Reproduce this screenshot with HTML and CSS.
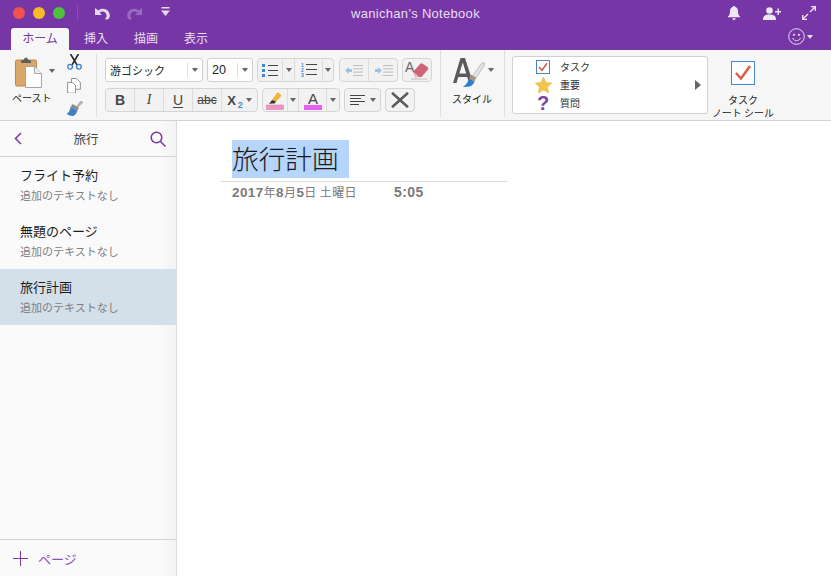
FILE: index.html
```html
<!DOCTYPE html>
<html lang="ja">
<head>
<meta charset="utf-8">
<title>wanichan's Notebook</title>
<link rel="stylesheet" href="styles.css">
</head>
<body>
<div class="app">
  <header class="chrome">
    <div class="titlebar">
      <div class="tb-left">
        <span class="light red"></span><span class="light yellow"></span><span class="light green"></span>
        <span class="tb-sep"></span>
        <svg class="qa undo" width="16" height="13" viewBox="0 0 16 13"><path d="M1 1v7h7L5.6 5.7C6.6 4.9 7.500 4.600 8.600 4.600c2.300 0 3.900 1.700 4 4 0 1.500-.6 2.600-1.700 3.600l3 .3c1.300-1.200 1.900-2.500 1.900-4.100C15.800 4.600 12.800 1.700 8.700 1.700c-1.700 0-3.200.6-4.400 1.700z" fill="#e6d9f0"/></svg>
        <svg class="qa redo" width="16" height="13" viewBox="0 0 16 13"><path d="M15 1v7H8l2.400-2.300C9.400 4.900 8.500 4.600 7.400 4.600c-2.300 0-3.900 1.700-4 4 0 1.500.6 2.600 1.700 3.600l-3 .3C.9 11.300.3 10 .3 8.400.2 4.600 3.200 1.700 7.300 1.700c1.700 0 3.200.6 4.400 1.700z" fill="#9a6cc0"/></svg>
        <svg class="qa more" width="9" height="10" viewBox="0 0 9 10"><rect x="0.500" y="0" width="8" height="1.500" fill="#e6d9f0"/><path d="M0 3.500h9L4.500 9z" fill="#e6d9f0"/></svg>
      </div>
      <div class="tb-title">wanichan's Notebook</div>
      <div class="tb-right">
        <svg width="12" height="14" viewBox="0 0 12 14"><path d="M6 0c.8 0 1.200.5 1.300 1.100C9.200 1.700 10 3.200 10 5.200c0 2.800.6 4 2 5.300v.8H0v-.8c1.400-1.300 2-2.500 2-5.300 0-2 .8-3.500 2.700-4.100C4.800.5 5.200 0 6 0zM4.400 12.200h3.200C7.500 13.200 6.900 14 6 14s-1.500-.8-1.600-1.800z" fill="#efe6f5"/></svg>
        <svg width="18" height="13" viewBox="0 0 18 13"><circle cx="6.500" cy="3.500" r="3.300" fill="#efe6f5"/><path d="M0 13c0-4 2-5.500 6.500-5.500S13 9 13 13z" fill="#efe6f5"/><path d="M12 4h2.500V1.500h1.400V4H18v1.400h-2.100V8h-1.400V5.400H12z" fill="#efe6f5"/></svg>
        <svg width="14" height="14" viewBox="0 0 14 14" fill="none" stroke="#efe6f5" stroke-width="1.300"><path d="M8 6l5.300-5.300M9 .7h4.300V5M6 8L.7 13.300M.7 9v4.300H5"/></svg>
      </div>
    </div>
    <div class="tabrow">
      <nav class="tabs">
        <span class="tab active">ホーム</span>
        <span class="tab">挿入</span>
        <span class="tab">描画</span>
        <span class="tab">表示</span>
      </nav>
      <div class="smile">
        <svg width="17" height="17" viewBox="0 0 17 17" fill="none" stroke="#e8dcf0" stroke-width="1"><circle cx="8.500" cy="8.500" r="7.800"/><circle cx="6" cy="6.800" r=".7" fill="#e8dcf0"/><circle cx="11" cy="6.800" r=".7" fill="#e8dcf0"/><path d="M4.500 10c1 2 2.500 2.700 4 2.700s3-.7 4-2.700"/></svg>
        <span class="caret light-caret"></span>
      </div>
    </div>
  </header>

  <section class="ribbon">
    <div class="group paste-group">
      <div class="paste">
        <div class="paste-top">
          <svg width="27" height="31" viewBox="0 0 27 31">
            <rect x="0.500" y="3" width="21" height="26" rx="1.500" fill="#d9a869" stroke="#b98a50"/>
            <path d="M6 4.500c0-1 1-1.500 2-1.500h.8c.3-1.500 1.200-2.500 2.200-2.500s1.900 1 2.200 2.500h.8c1 0 2 .5 2 1.500V6H6z" fill="#5e5e5e"/>
            <path d="M10.500 9.500h9l7 7V30.500h-16z" fill="#fff" stroke="#a5a5a5"/>
            <path d="M19.500 9.500v7h7" fill="#f0f0f0" stroke="#a5a5a5"/>
          </svg>
          <span class="caret paste-caret"></span>
        </div>
        <span class="paste-label">ペースト</span>
      </div>
      <div class="clip-tools">
        <svg width="15" height="16" viewBox="0 0 15 16" fill="none"><path d="M3.500 0l6.500 11M11.500 0L5 11" stroke="#222" stroke-width="1.600"/><circle cx="3" cy="13" r="2.400" stroke="#3a7cc4" stroke-width="1.300"/><circle cx="12" cy="13" r="2.400" stroke="#3a7cc4" stroke-width="1.300"/></svg>
        <svg width="14" height="16" viewBox="0 0 14 16" fill="#fff" stroke="#8c8c8c"><path d="M4.500 .5h5l4 4v7h-9z"/><path d="M.5 4.500h5l3 3v8h-8z"/></svg>
        <svg width="17" height="16" viewBox="0 0 17 16"><path d="M11 5l3.600-4.400c.6-.6 1.300-.5 1.800 0s.4 1.200-.1 1.700L12 6z" fill="#b8b8b8" stroke="#888" stroke-width=".5"/><path d="M6.500 3l6.500 4-1.500 3L4.500 6z" fill="#8a8a8a"/><path d="M4.500 6l7 4c-1 2.500-2.500 5-4.500 5.300C5 15.500 2.500 14.500.5 13 2.800 12 3.800 9 4.500 6z" fill="#3f7fc2"/></svg>
      </div>
    </div>

    <div class="group font-group">
      <div class="row">
        <div class="combo font-name"><span class="combo-text">游ゴシック</span><span class="combo-arrow"><span class="caret"></span></span></div>
        <div class="combo font-size"><span class="combo-text">20</span><span class="combo-arrow"><span class="caret"></span></span></div>
        <div class="btns list-btns">
          <span class="btn w-bul">
            <svg width="16" height="13" viewBox="0 0 16 13"><g fill="#3d88d8"><rect x="0" y="0" width="3" height="3"/><rect x="0" y="5" width="3" height="3"/><rect x="0" y="10" width="3" height="3"/></g><g fill="#444"><rect x="6" y="1" width="10" height="1"/><rect x="6" y="6" width="10" height="1"/><rect x="6" y="11" width="10" height="1"/></g></svg>
          </span>
          <span class="btn w-car"><span class="caret"></span></span>
          <span class="btn w-num">
            <svg width="16" height="14" viewBox="0 0 16 14"><g fill="#3d88d8" font-family="Liberation Sans" font-size="5" font-weight="700"><text x="0" y="4">1</text><text x="0" y="9">2</text><text x="0" y="14">3</text></g><g fill="#444"><rect x="5" y="1" width="11" height="1"/><rect x="5" y="6" width="11" height="1"/><rect x="5" y="11" width="11" height="1"/></g></svg>
          </span>
          <span class="btn w-car2"><span class="caret"></span></span>
        </div>
        <div class="btns indent-btns">
          <span class="btn w-ind">
            <svg width="18" height="11" viewBox="0 0 18 11"><path d="M0 5.500L4 2v2h3v3H4v2z" fill="#9cc3e6"/><g fill="#bdbdbd"><rect x="8" y="0" width="10" height="1"/><rect x="8" y="3.300" width="10" height="1"/><rect x="8" y="6.600" width="10" height="1"/><rect x="8" y="10" width="10" height="1"/></g></svg>
          </span>
          <span class="btn w-ind">
            <svg width="18" height="11" viewBox="0 0 18 11"><path d="M7 5.500L3 2v2H0v3h3v2z" fill="#9cc3e6"/><g fill="#bdbdbd"><rect x="8" y="0" width="10" height="1"/><rect x="8" y="3.300" width="10" height="1"/><rect x="8" y="6.600" width="10" height="1"/><rect x="8" y="10" width="10" height="1"/></g></svg>
          </span>
        </div>
        <div class="btns clear-btn">
          <span class="btn w-clear">
            <svg width="25" height="20" viewBox="0 0 25 20"><text x="0" y="12" font-family="Liberation Sans" font-size="14" fill="#666">A</text><path d="M8 12l7-8c1-1 2-1 3 0l4.500 3c1 1 1 2 0 3l-6 7h-3.500z" fill="#cf6475"/><path d="M8 12l5.500 4-1 1.500H10z" fill="#eeb6be"/><rect x="6" y="18.500" width="16" height="1" fill="#bbb"/></svg>
          </span>
        </div>
      </div>
      <div class="row">
        <div class="btns format-btns">
          <span class="btn w-fmt fmt b">B</span>
          <span class="btn w-fmt fmt i">I</span>
          <span class="btn w-fmt fmt u">U</span>
          <span class="btn w-fmt fmt s">abc</span>
          <span class="btn w-sub">
            <span class="x2">X<sub>2</sub></span><span class="caret"></span>
          </span>
        </div>
        <div class="btns color-btns">
          <span class="btn w-col1">
            <svg width="18" height="19" viewBox="0 0 18 19"><path d="M6 9l5-7c.4-.5 1-.6 1.500-.2l2.500 2c.5.4.5 1 .1 1.400L10 10.500z" fill="#f0b63c"/><path d="M6 9l4 1.500-1.500 2H5.500L3 13z" fill="#333"/><rect x="0.500" y="14" width="17" height="4.500" fill="#ef94c4" stroke="#d67aa9" stroke-width=".5"/></svg>
          </span>
          <span class="btn w-car3"><span class="caret"></span></span>
          <span class="btn w-col2">
            <svg width="18" height="19" viewBox="0 0 18 19"><text x="9" y="12.500" text-anchor="middle" font-family="Liberation Sans" font-size="15" fill="#444">A</text><rect x="0" y="14" width="18" height="5" fill="#e85ff0"/></svg>
          </span>
          <span class="btn w-car4"><span class="caret"></span></span>
        </div>
        <div class="btns align-btn">
          <span class="btn w-align">
            <svg width="15" height="10" viewBox="0 0 15 10"><g fill="#444"><rect x="0" y="0" width="15" height="1"/><rect x="0" y="3" width="11" height="1"/><rect x="0" y="6" width="15" height="1"/><rect x="0" y="9" width="9" height="1"/></g></svg>
            <span class="caret"></span>
          </span>
        </div>
        <div class="btns del-btn">
          <span class="btn w-del">
            <svg width="18" height="16" viewBox="0 0 18 16"><path d="M1 .8l16 14.400M17 .8L1 15.200" stroke="#5a5a5a" stroke-width="2.600" fill="none"/></svg>
          </span>
        </div>
      </div>
    </div>

    <div class="group style-group">
      <div class="style-top">
        <svg width="32" height="30" viewBox="0 0 32 30">
          <path d="M7.500 0h4.500l8 25h-4l-1.800-6H5.300l-1.800 6H.0zM6.300 15.500h6.900L9.800 4.500z" fill="#5a5a5a"/>
          <path d="M19.500 18L28.500 5.500c.8-1 2-1.200 2.800-.5.700.7.500 1.800-.3 2.800L23 20z" fill="#e3e3e3" stroke="#9d9d9d" stroke-width=".6"/>
          <path d="M18 16.500l5 3.500-1.500 3.500-5.500-2.500z" fill="#a89478"/>
          <path d="M16 21l5.500 2.500c-1.200 3-3 4.600-5 5-1.500.3-4 .5-6.500.5 2.500-1.500 4.500-4.500 6-8z" fill="#2f7fd0"/>
        </svg>
        <span class="caret style-caret"></span>
      </div>
      <span class="style-label">スタイル</span>
    </div>

    <div class="tagbox">
      <ul class="taglist">
        <li>
          <span class="tag-ico"><svg width="14" height="14" viewBox="0 0 14 14"><rect x=".5" y=".5" width="13" height="13" fill="#fff" stroke="#4a86c5"/><path d="M3 7l3 3.200 5-7" fill="none" stroke="#d4574e" stroke-width="1.500"/></svg></span>
          <span>タスク</span>
        </li>
        <li>
          <span class="tag-ico"><svg width="17" height="16" viewBox="0 0 17 16"><path d="M8.500 0l2.500 5.500 5.800.6-4.300 4 1.200 5.900-5.200-3-5.200 3 1.200-5.900-4.300-4 5.800-.6z" fill="#f3c54a" stroke="#e2ad35" stroke-width=".5"/></svg></span>
          <span>重要</span>
        </li>
        <li>
          <span class="tag-ico q">?</span>
          <span>質問</span>
        </li>
      </ul>
      <span class="tag-arrow"></span>
    </div>

    <div class="group task-group">
      <svg width="24" height="24" viewBox="0 0 24 24"><rect x=".5" y=".5" width="23" height="23" fill="#fff" stroke="#4a86c5"/><path d="M5 12l5 5.500 9-12.500" fill="none" stroke="#d9614c" stroke-width="2.600"/></svg>
      <span class="task-l1">タスク</span>
      <span class="task-l2">ノート シール</span>
    </div>
  </section>

  <main class="body">
    <aside class="sidebar">
      <div class="side-head">
        <svg width="8" height="13" viewBox="0 0 8 13" fill="none" stroke="#7a35a6" stroke-width="1.500"><path d="M7 1L1.500 6.500 7 12"/></svg>
        <span class="side-title">旅行</span>
        <svg width="16" height="16" viewBox="0 0 16 16" fill="none" stroke="#7a35a6" stroke-width="1.500"><circle cx="6.500" cy="6.500" r="5.300"/><path d="M10.500 10.500l5 5"/></svg>
      </div>
      <ul class="pages">
        <li class="page-item"><span class="p-title">フライト予約</span><span class="p-sub">追加のテキストなし</span></li>
        <li class="page-item"><span class="p-title">無題のページ</span><span class="p-sub">追加のテキストなし</span></li>
        <li class="page-item selected"><span class="p-title">旅行計画</span><span class="p-sub">追加のテキストなし</span></li>
      </ul>
      <div class="side-foot">
        <svg width="15" height="15" viewBox="0 0 15 15" fill="none" stroke="#7a35a6" stroke-width="1"><path d="M7.500 0v15M0 7.500h15"/></svg>
        <span class="add-page">ページ</span>
      </div>
    </aside>
    <article class="note">
      <h1 class="note-title"><span class="sel">旅行計画&nbsp;</span></h1>
      <div class="note-meta"><span class="date"><b>2017</b>年<b>8</b>月<b>5</b>日 土曜日</span><span class="time">5:05</span></div>
    </article>
  </main>
</div>
</body>
</html>
```

FILE: styles.css
```css
* { box-sizing: border-box; }
html, body { margin: 0; height: 100%; }
body { font-family: "Noto Sans CJK JP", "Liberation Sans", sans-serif; background: #fff; overflow: hidden; }
.app { width: 831px; height: 576px; display: flex; flex-direction: column; }

.chrome { background: #7636a5; height: 50px; flex: none; display: flex; flex-direction: column; }
.titlebar { height: 28px; display: grid; grid-template-columns: 1fr auto 1fr; align-items: center; }
.tb-left { display: flex; align-items: center; padding-left: 13px; margin-top: -2px; }
.light { width: 12px; height: 12px; border-radius: 50%; margin-right: 8px; }
.red { background: #f0534f; }
.yellow { background: #f9b92b; }
.green { background: #4cc23f; }
.tb-sep { width: 1px; height: 16px; background: #8750ae; margin-left: 4px; }
.qa { flex: none; }
.undo { margin-left: 16px; }
.redo { margin-left: 17px; }
.more { margin-left: 18px; margin-top: -2px; }
.tb-title { font-family: "Liberation Sans", sans-serif; font-size: 13px; letter-spacing: .3px; color: #e9dff1; margin-top: -2px; }
.tb-right { display: flex; align-items: center; justify-content: flex-end; padding-right: 15px; margin-top: -2px; }
.tb-right svg:nth-child(2) { margin-left: 23px; }
.tb-right svg:nth-child(3) { margin-left: 21px; }

.tabrow { height: 22px; display: flex; justify-content: space-between; }
.tabs { display: flex; padding-left: 11px; }
.tab { font-size: 12px; line-height: 19px; color: #e9dff1; height: 22px; width: 50px; text-align: center; white-space: nowrap; }
.tab.active { width: 58px; margin-right: 2px; background: #f6f6f6; color: #7636a5; border-radius: 3px 3px 0 0; }
.smile { display: flex; align-items: center; gap: 2px; padding-right: 18px; margin-top: -5px; height: 27px; }
.smile .light-caret { border-top-color: #e8dcf0; }

.ribbon { height: 71px; flex: none; background: #f6f6f6; border-bottom: 1px solid #d4d4d4; display: flex; }
.group { display: flex; flex: none; }
.paste-group { width: 97px; border-right: 1px solid #dedede; margin: 4px 0 3px; padding-left: 12px; }
.paste { display: flex; flex-direction: column; width: 48px; padding-top: 2px; }
.paste-top { display: flex; align-items: center; gap: 7px; padding-left: 3px; height: 33px; }
.paste-caret { margin-top: -4px; }
.paste-label { font-size: 10px; line-height: 14px; margin-top: 2px; color: #222; white-space: nowrap; }
.clip-tools { display: flex; flex-direction: column; align-items: center; gap: 8px; width: 18px; margin-left: 5px; }

.caret { display: inline-block; width: 0; height: 0; border-left: 3px solid transparent; border-right: 3px solid transparent; border-top: 4px solid #666; flex: none; }

.font-group { flex-direction: column; width: 344px; padding: 8px 0 0 8px; gap: 6px; border-right: 1px solid #dedede; margin-bottom: 3px; }
.row { display: flex; height: 24px; }
.combo { height: 24px; background: #fff; border: 1px solid #d0d0d0; border-radius: 3px; display: flex; align-items: center; }
.font-name { width: 98px; }
.font-size { width: 46px; margin-left: 4px; }
.combo-text { flex: 1; font-size: 11px; padding-left: 4px; color: #222; white-space: nowrap; }
.font-size .combo-text { font-family: "Liberation Sans", sans-serif; font-size: 12.500px; }
.combo-arrow { width: 15px; height: 14px; border-left: 1px solid #ddd; display: flex; align-items: center; justify-content: center; }

.btns { display: flex; height: 24px; background: #f2f2f2; border: 1px solid #d4d4d4; border-radius: 4px; overflow: hidden; flex: none; }
.btn { display: flex; align-items: center; justify-content: center; height: 100%; border-right: 1px solid #dcdcdc; flex: none; }
.btn:last-child { border-right: 0; }
.list-btns { width: 77px; margin-left: 4px; }
.w-bul { width: 25px; }
.w-car { width: 12px; }
.w-num { width: 28px; }
.w-car2 { flex: 1; }
.indent-btns { width: 59px; margin-left: 5px; }
.w-ind { width: 29px; }
.clear-btn { width: 30px; margin-left: 4px; }
.w-clear { width: 100%; }

.format-btns { width: 153px; }
.w-fmt { width: 29px; }
.fmt { font-family: "Liberation Sans", sans-serif; font-size: 14px; color: #444; }
.b { font-weight: 700; }
.i { font-style: italic; font-family: "Liberation Serif", serif; }
.u { text-decoration: underline; text-underline-offset: 2px; }
.s { text-decoration: line-through; font-size: 12px; }
.w-sub { flex: 1; gap: 3px; }
.x2 { font-family: "Liberation Sans", sans-serif; font-weight: 700; font-size: 13px; color: #444; line-height: 1; }
.x2 sub { color: #3d88d8; font-size: 9px; line-height: 0; margin-left: 2px; }
.color-btns { width: 78px; margin-left: 4px; }
.w-col1 { width: 25px; }
.w-col2 { width: 28px; }
.w-car3 { width: 11px; }
.w-car4 { flex: 1; }
.align-btn { width: 37px; margin-left: 4px; }
.w-align { width: 100%; gap: 5px; }
.del-btn { width: 30px; margin-left: 4px; }
.w-del { width: 100%; }

.style-group { flex-direction: column; width: 64px; border-right: 1px solid #dedede; margin-bottom: 3px; padding: 7px 0 0 12px; }
.style-top { display: flex; align-items: center; gap: 3px; height: 32px; }
.style-caret { margin-top: -6px; }
.style-label { font-size: 10px; line-height: 14px; margin-top: 3px; margin-left: -1px; color: #222; white-space: nowrap; }

.tagbox { width: 196px; height: 58px; margin: 6px 0 0 7px; background: #fff; border: 1px solid #d0d0d0; border-radius: 3px; display: flex; align-items: center; justify-content: space-between; flex: none; padding-right: 6px; }
.taglist { list-style: none; margin: 0; padding: 0 0 0 20px; }
.taglist li { display: flex; align-items: center; height: 18px; font-size: 10px; line-height: 14px; color: #333; }
.tag-ico { width: 20px; margin-right: 7px; display: flex; justify-content: center; align-items: center; }
.q { font-family: "Liberation Sans", sans-serif; font-weight: 700; font-size: 20px; line-height: 18px; color: #7b45aa; }
.tag-arrow { width: 0; height: 0; border-top: 5px solid transparent; border-bottom: 5px solid transparent; border-left: 6px solid #666; }

.task-group { flex-direction: column; align-items: center; width: 70px; padding-top: 11px; }
.task-group svg { flex: none; margin-bottom: 8px; }
.task-l1, .task-l2 { font-size: 10px; line-height: 13px; color: #222; white-space: nowrap; }

.body { flex: 1; display: flex; min-height: 0; }
.sidebar { width: 177px; flex: none; display: flex; flex-direction: column; background: linear-gradient(to right, #fafafa 90%, #f3f3f3); border-right: 1px solid #dcdcdc; }
.side-head { height: 36px; flex: none; display: flex; align-items: center; justify-content: space-between; padding: 0 10px 0 14px; border-bottom: 1px solid #d4d4d4; }
.side-title { font-size: 12.500px; color: #444; }
.pages { list-style: none; margin: 0; padding: 0; flex: 1; }
.page-item { height: 56px; display: flex; flex-direction: column; padding: 9px 0 0 20px; }
.page-item.selected { background: #d3dfe9; }
.p-title { font-size: 13px; line-height: 18px; color: #1c1c1c; white-space: nowrap; }
.p-sub { font-size: 11px; line-height: 16px; margin-top: 3px; color: #7f7f7f; white-space: nowrap; }
.side-foot { height: 37px; flex: none; display: flex; align-items: center; padding: 0 0 0 13px; gap: 10px; border-top: 1px solid #d4d4d4; }
.add-page { font-size: 13px; color: #8a50b8; }

.note { flex: 1; padding: 19px 0 0 55px; }
.note-title { display: flex; margin: 0 0 0 -12px; padding-left: 12px; width: 288px; height: 42px; font-size: 26.670px; font-weight: 300; color: #1a1a1a; border-bottom: 1px solid #dcdcdc; }
.sel { background: #b5d5fb; height: 38px; line-height: 35px; padding-right: 4px; white-space: nowrap; }
.note-meta { display: flex; line-height: 20px; color: #7a7a7a; }
.date { width: 162px; font-size: 12px; letter-spacing: .4px; white-space: nowrap; }
.date b { font-family: "Liberation Sans", sans-serif; font-size: 13.500px; }
.time { font-family: "Liberation Sans", sans-serif; font-weight: 700; font-size: 14px; letter-spacing: .4px; }
```
